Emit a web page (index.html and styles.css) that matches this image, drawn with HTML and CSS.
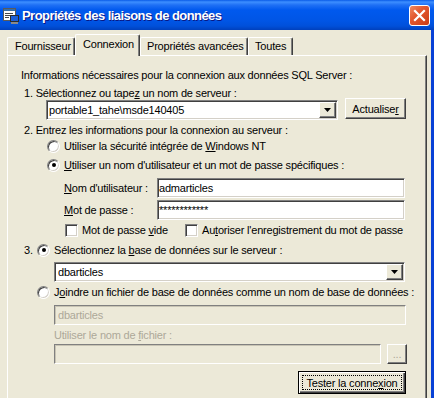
FILE: index.html
```html
<!DOCTYPE html>
<html lang="fr">
<head>
  <meta charset="UTF-8">
  <title>Propriétés des liaisons de données</title>
  <link rel="stylesheet" href="styles.css">
</head>
<body>
  <div class="window">
    <div class="titlebar">
      <svg class="app-icon" width="16" height="16" viewBox="0 0 16 16">
        <rect x="0.5" y="0.5" width="12" height="12" fill="#fff" stroke="#5a5a5a"/>
        <rect x="1" y="1" width="11" height="2" fill="#3a6ea5"/>
        <path d="M2 5.5h8M2 7.5h5M2 9.5h4" stroke="#4a4a4a"/>
        <rect x="7.5" y="7.5" width="8" height="6" fill="#1c5ed6" stroke="#2b2b2b"/>
        <rect x="8" y="14" width="7" height="2" fill="#8a8a8a"/>
      </svg>
      <span class="title">Propriétés des liaisons de données</span>
      <div class="close-btn">
        <svg width="13" height="13" viewBox="0 0 13 13">
          <path d="M2 2l9 9M11 2l-9 9" stroke="#fff" stroke-width="2.2" stroke-linecap="square"/>
        </svg>
      </div>
    </div>

    <div class="client">
      <div class="tabs">
        <div class="tab tab-provider">Fournisseur</div>
        <div class="tab tab-active">Connexion</div>
        <div class="tab tab-advanced">Propriétés avancées</div>
        <div class="tab tab-all">Toutes</div>
      </div>

      <div class="panel">
        <div class="line info">Informations nécessaires pour la connexion aux données SQL Server :</div>
        <div class="line step step1">1. Sélectionnez ou tape<u>z</u> un nom de serveur :</div>
        <div class="server-row">
          <div class="combo server-combo">
            <span class="combo-text">portable1_tahe\msde140405</span>
            <span class="drop-btn"><svg width="7" height="4" viewBox="0 0 7 4"><path d="M0 0h7L3.5 4z" fill="#000"/></svg></span>
          </div>
          <div class="btn refresh-btn">Actualise<u>r</u></div>
        </div>
        <div class="line step step2">2. Entrez les informations pour la connexion au serveur :</div>
        <div class="option opt-nt"><span class="radio"></span><span>Utiliser la sécurité intégrée de <u>W</u>indows NT</span></div>
        <div class="option opt-user"><span class="radio checked"></span><span><u>U</u>tiliser un nom d'utilisateur et un mot de passe spécifiques :</span></div>
        <div class="field-row row-user">
          <span class="field-label"><u>N</u>om d'utilisateur :</span>
          <div class="textbox user-box">admarticles</div>
        </div>
        <div class="field-row row-pass">
          <span class="field-label"><u>M</u>ot de passe :</span>
          <div class="textbox user-box">************</div>
        </div>
        <div class="checks">
          <div class="check-item first-check"><span class="check"></span><span>Mot de passe <u>v</u>ide</span></div>
          <div class="check-item"><span class="check"></span><span>Au<u>t</u>oriser l'enregistrement du mot de passe</span></div>
        </div>
        <div class="option db-select"><span class="step-num">3.</span><span class="radio checked"></span><span>Sélectionnez la <u>b</u>ase de données sur le serveur :</span></div>
        <div class="combo db-combo">
          <span class="combo-text">dbarticles</span>
          <span class="drop-btn"><svg width="7" height="4" viewBox="0 0 7 4"><path d="M0 0h7L3.5 4z" fill="#000"/></svg></span>
        </div>
        <div class="option opt-attach"><span class="radio"></span><span>J<u>o</u>indre un fichier de base de données comme un nom de base de données :</span></div>
        <div class="textbox disabled attach-box">dbarticles</div>
        <div class="line disabled-text file-label">Utiliser le nom de <u>f</u>ichier :</div>
        <div class="file-row">
          <div class="textbox disabled file-box"></div>
          <div class="btn browse-btn">...</div>
        </div>
        <div class="btn default-btn"><span class="focus-rect">Tester la conne<u>x</u>ion</span></div>
      </div>
    </div>
  </div>
</body>
</html>
```

FILE: styles.css
```css
* {
  box-sizing: border-box;
}

body {
  margin: 0;
  background: #ece9d8;
  font-family: "Liberation Sans", Arial, sans-serif;
  font-size: 11px;
  letter-spacing: -0.2px;
  color: #000;
}

.window {
  width: 434px;
  height: 398px;
  display: flex;
  flex-direction: column;
  overflow: hidden;
}

/* title bar */
.titlebar {
  height: 30px;
  flex: none;
  display: flex;
  align-items: center;
  padding: 0 4px 0 3px;
  background: linear-gradient(#0a5ce8 0, #3d8fff 2px, #1f70f5 5px, #0059ee 10px, #0055e5 21px, #0050da 26px, #0040bc 30px);
  color: #fff;
}

.app-icon {
  flex: none;
  margin-top: 1px;
}

.title {
  flex: 1;
  margin-left: 3px;
  font-weight: bold;
  font-size: 13px;
  letter-spacing: -0.55px;
  text-shadow: 1px 1px #0a1883;
  white-space: nowrap;
}

.close-btn {
  width: 21px;
  height: 21px;
  border: 1px solid #fff;
  border-radius: 3px;
  background: linear-gradient(135deg, #f08a62 0%, #e3582f 40%, #cc3c14 100%);
  display: flex;
  align-items: center;
  justify-content: center;
}

/* client area */
.client {
  flex: 1;
  min-height: 0;
  display: flex;
  flex-direction: column;
  padding: 4px 0 0 7px;
  border-right: 3px solid #0841d6;
}

.tabs {
  height: 21px;
  flex: none;
  display: flex;
  align-items: flex-start;
}

.tab {
  height: 18px;
  margin-top: 3px;
  padding-left: 6px;
  line-height: 16px;
  white-space: nowrap;
  border-top: 1px solid #fff;
  border-left: 1px solid #fff;
  border-right: 1px solid #404040;
  border-radius: 2px 2px 0 0;
  box-shadow: inset -1px 0 #808080;
}

.tab-provider {
  width: 68px;
  padding-left: 7px;
}

.tab-active {
  width: 65px;
  height: 22px;
  margin-top: 0;
  padding-left: 7px;
  line-height: 18px;
  position: relative;
  z-index: 1;
  background: #ece9d8;
}

.tab-advanced {
  width: 108px;
}

.tab-all {
  width: 45px;
}

.panel {
  width: 420px;
  flex: 1;
  display: flex;
  flex-direction: column;
  align-items: flex-start;
  padding: 12px 0 0 13px;
  border-top: 1px solid #fff;
  border-left: 1px solid #fff;
  border-right: 1px solid #404040;
  box-shadow: inset -1px 0 #808080;
}

.line,
.option {
  height: 14px;
  line-height: 14px;
  white-space: nowrap;
}

.step {
  margin-left: 3px;
}

.step1 {
  margin-top: 4px;
}

.step2 {
  margin-top: 3px;
}

/* server row */
.server-row {
  display: flex;
  height: 22px;
  margin: -2px 0 0 25px;
}

.combo {
  height: 20px;
  display: flex;
  align-items: center;
  background: #fff;
  border: 1px solid;
  border-color: #808080 #fff #fff #808080;
  box-shadow: inset 1px 1px #404040, inset -1px -1px #d4d0c8;
  white-space: nowrap;
}

.combo-text {
  flex: 1;
  padding-left: 2px;
}

.drop-btn {
  width: 17px;
  height: 16px;
  margin-right: 1px;
  display: flex;
  align-items: center;
  justify-content: center;
  background: #ece9d8;
  border: 1px solid;
  border-color: #fff #404040 #404040 #fff;
  box-shadow: inset -1px -1px #808080;
}

.server-combo {
  width: 292px;
  margin-top: 2px;
}

.btn {
  display: flex;
  align-items: center;
  justify-content: center;
  background: #ece9d8;
  border: 1px solid;
  border-color: #fff #404040 #404040 #fff;
  box-shadow: inset -1px -1px #808080;
  white-space: nowrap;
}

.refresh-btn {
  width: 61px;
  height: 21px;
  margin-left: 7px;
}

/* options */
.option {
  display: flex;
  align-items: center;
}

.radio {
  width: 13px;
  height: 13px;
  flex: none;
  margin-right: 4px;
  border-radius: 50%;
  background: #fff;
  border: 1px solid;
  border-color: #808080 #fff #fff #808080;
  box-shadow: inset 1px 1px #404040, inset -1px -1px #d4d0c8;
  display: flex;
  align-items: center;
  justify-content: center;
}

.radio.checked::after {
  content: "";
  width: 4px;
  height: 4px;
  border-radius: 50%;
  background: #000;
}

.opt-nt {
  margin: 2px 0 0 26px;
}

.opt-user {
  margin: 5px 0 0 26px;
}

.field-row {
  display: flex;
  align-items: center;
  height: 20px;
  margin-left: 43px;
}

.row-user {
  margin-top: 6px;
}

.row-pass {
  margin-top: 2px;
}

.field-label {
  width: 93px;
  white-space: nowrap;
}

.textbox {
  height: 20px;
  line-height: 18px;
  padding-left: 1px;
  background: #fff;
  border: 1px solid;
  border-color: #808080 #fff #fff #808080;
  box-shadow: inset 1px 1px #404040, inset -1px -1px #d4d0c8;
  white-space: nowrap;
}

.user-box {
  width: 248px;
}

.checks {
  display: flex;
  align-items: center;
  height: 14px;
  margin: 3px 0 0 44px;
  white-space: nowrap;
}

.check-item {
  display: flex;
  align-items: center;
}

.first-check {
  width: 120px;
}

.check {
  width: 13px;
  height: 13px;
  margin-right: 4px;
  background: #fff;
  border: 1px solid;
  border-color: #808080 #fff #fff #808080;
  box-shadow: inset 1px 1px #404040, inset -1px -1px #d4d0c8;
}

.db-select {
  margin: 6px 0 0 3px;
}

.step-num {
  width: 13px;
}

.db-combo {
  width: 351px;
  margin: 5px 0 0 33px;
}

.db-combo .combo-text {
  padding-left: 3px;
}

.opt-attach {
  margin: 3px 0 0 16px;
}

.disabled {
  background: #ece9d8;
  color: #aca899;
  box-shadow: inset 1px 1px #c8c4b4, inset -1px -1px #ece9d8;
  padding-left: 3px;
}

.attach-box {
  width: 352px;
  margin: 6px 0 0 33px;
}

.disabled-text {
  color: #aca899;
}

.file-label {
  margin: 3px 0 0 33px;
}

.file-row {
  display: flex;
  height: 20px;
  margin: 2px 0 0 33px;
}

.file-box {
  width: 327px;
}

.browse-btn {
  width: 20px;
  height: 20px;
  margin-left: 6px;
  color: #aca899;
}

.default-btn {
  width: 108px;
  height: 23px;
  margin: 7px 0 0 277px;
  border: 1px solid #000;
  box-shadow: inset 1px 1px #fff, inset -1px -1px #404040, inset -2px -2px #808080;
  padding: 3px;
}

.focus-rect {
  width: 100%;
  height: 100%;
  display: flex;
  align-items: center;
  justify-content: center;
  border: 1px dotted #000;
}
```
